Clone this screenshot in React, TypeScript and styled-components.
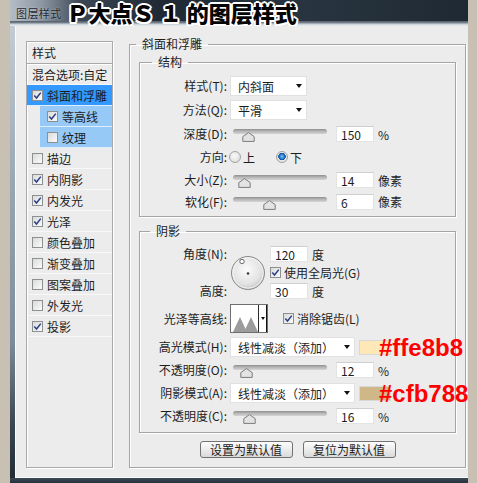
import React from "react";
import styled, { createGlobalStyle } from "styled-components";

const GlobalStyle = createGlobalStyle`
  html, body { margin: 0; padding: 0; background: #c9c0b4; }
  body {
    font-family: "Noto Sans CJK SC", "Noto Sans", sans-serif;
    font-size: 12px;
    color: #1d1d1d;
  }
  * { box-sizing: border-box; }
`;

const Page = styled.div`
  width: 477px;
  height: 483px;
  overflow: hidden;
  padding-left: 10px;
  background: #c9c0b4;
`;

const Window = styled.div`
  width: 458px;
  height: 483px;
  display: flex;
  flex-direction: column;
`;

const TitleBar = styled.div`
  flex: none;
  height: 26px;
  display: flex;
  align-items: center;
  gap: 5px;
  padding: 0 0 1px 6px;
  background:
    linear-gradient(to bottom, rgba(0,0,0,0) 21px, #4f5b67 21px, #7d8893 23px, #c6ced5 24px, #e9edf0 26px),
    linear-gradient(to right, #b4bdc5 0px, #8b96a2 32px, #3a4652 72px, #1f2a35 150px, #28343f 300px, #1e2933 100%);
`;

const TitleSmall = styled.span`
  font-size: 11px;
  line-height: 14px;
  color: #1e2630;
  letter-spacing: 0.4px;
  text-shadow: 0 0 2px rgba(255,255,255,0.6);
`;

const TitleBig = styled.span`
  font-size: 22px;
  line-height: 25px;
  font-weight: 900;
  color: #050505;
  white-space: pre;
  text-shadow:
    2px 0 0 #fff, -2px 0 0 #fff, 0 2px 0 #fff, 0 -2px 0 #fff,
    1.5px 1.5px 0 #fff, -1.5px 1.5px 0 #fff, 1.5px -1.5px 0 #fff, -1.5px -1.5px 0 #fff;
`;

const Body = styled.div`
  flex: 1;
  display: flex;
  padding-left: 5px;
  background: linear-gradient(to bottom, #c3ccd5 0%, #99a7b4 35%, #7d8c9b 70%, #3a4652 88%, #222d38 100%);
`;

const Content = styled.div`
  flex: 1;
  display: flex;
  align-items: stretch;
  gap: 16px;
  padding: 11px 2px 0 10px;
  background: #ececec;
  border-left: 1px solid #fbfbfb;
  border-bottom: 1px solid #fbfbfb;
  align-self: stretch;
`;

const BottomFrame = styled.div`
  flex: none;
  height: 5px;
  background: linear-gradient(to bottom, #3d4955, #26313c);
`;

/* ---------- left style list ---------- */

const StyleList = styled.div`
  width: 87px;
  flex: none;
  margin: 4px 0 9px;
  border: 1px solid #a9a9a9;
  box-shadow: 1px 1px 0 #fff, inset 1px 1px 0 #fff;
  background: #ececec;
  display: flex;
  flex-direction: column;
`;

const ListHeader = styled.div`
  height: 22px;
  padding-left: 5px;
  display: flex;
  align-items: center;
  border-bottom: 1px solid #a9a9a9;
  box-shadow: 0 1px 0 #fff;
`;

type Tone = "plain" | "active" | "sub";

const ListItem = styled.div<{ $tone: Tone }>`
  height: 21px;
  display: flex;
  align-items: center;
  gap: 4px;
  white-space: nowrap;
  border-bottom: 1px solid ${(p) => (p.$tone === "plain" ? "#f8f8f8" : "#dfeefc")};
  margin-left: ${(p) => (p.$tone === "sub" ? "13px" : "0")};
  padding-left: ${(p) => (p.$tone === "sub" ? "7px" : "5px")};
  background: ${(p) => (p.$tone === "active" ? "#3399ff" : p.$tone === "sub" ? "#97c9f7" : "transparent")};
`;

const CheckBoxFrame = styled.span`
  width: 11px;
  height: 11px;
  flex: none;
  border: 1px solid #8e8f90;
  background: linear-gradient(135deg, #d9dadb, #fbfbfb);
  display: inline-flex;
  align-items: center;
  justify-content: center;
`;

function CheckBox({ on }: { on: boolean }) {
  return (
    <CheckBoxFrame>
      {on && (
        <svg width="9" height="9" viewBox="0 0 9 9">
          <path d="M1.3 4.6 L3.5 7 L7.8 1.6" fill="none" stroke="#2b3f86" strokeWidth="1.5" />
        </svg>
      )}
    </CheckBoxFrame>
  );
}

/* ---------- groups ---------- */

const OuterGroup = styled.fieldset`
  flex: 1;
  margin: 0 0 9px;
  min-width: 0;
  padding: 4px 9px 9px;
  border: 1px solid #a5a5a5;
  box-shadow: 1px 1px 0 #fff, inset 1px 1px 0 #fff;
`;

const InnerGroup = styled.fieldset<{ $gapTop: number }>`
  margin: ${(p) => p.$gapTop}px 0 0;
  min-width: 0;
  padding: 0;
  border: 1px solid #a5a5a5;
  box-shadow: 1px 1px 0 #fff, inset 1px 1px 0 #fff;
`;

const GroupLegend = styled.legend<{ $offset: number }>`
  margin-left: ${(p) => p.$offset}px;
  padding: 0 6px;
  font-size: 12px;
  line-height: 14px;
`;

const StructGrid = styled.div`
  display: grid;
  grid-template-rows: 22px 26px 22px 24px 22px 21px;
  padding: 6px 0 4px;
`;

const FormRow = styled.div`
  display: flex;
  align-items: center;
`;

const FieldLabel = styled.div`
  width: 87px;
  flex: none;
  margin-right: 3px;
  text-align: right;
  white-space: nowrap;
  line-height: 14px;
`;

const SelectBox = styled.div<{ $w: number }>`
  width: ${(p) => p.$w}px;
  height: 20px;
  flex: none;
  display: flex;
  align-items: center;
  justify-content: space-between;
  padding: 0 4px 0 7px;
  background: #fff;
  border: 1px solid #e1e1e1;
  white-space: nowrap;
`;

const Caret = styled.span`
  width: 0;
  height: 0;
  border-left: 3.5px solid transparent;
  border-right: 3.5px solid transparent;
  border-top: 4px solid #111;
`;

const SliderBox = styled.div`
  position: relative;
  width: 100px;
  height: 16px;
  flex: none;
`;

const SliderTrack = styled.div`
  margin: 3px 3px 0;
  height: 5px;
  border-radius: 3px;
  background: linear-gradient(to bottom, #8f8f8f, #b9b9b9 50%, #d4d4d4);
`;

const ThumbMark = styled.svg`
  position: absolute;
  top: 6px;
`;

function Slider({ thumb }: { thumb: number }) {
  return (
    <SliderBox>
      <SliderTrack />
      <ThumbMark width="13" height="10" viewBox="0 0 13 10" style={{ left: thumb - 6.5 }}>
        <path d="M6.5 0.6 L12.2 4.6 V9.4 H0.8 V4.6 Z" fill="#e3e3e3" stroke="#7c7c7c" strokeWidth="1" />
      </ThumbMark>
    </SliderBox>
  );
}

const NumBox = styled.div<{ $gap: number }>`
  width: 38px;
  height: 16px;
  flex: none;
  margin-left: ${(p) => p.$gap}px;
  padding-left: 4px;
  line-height: 15px;
  font-size: 12px;
  background: #fff;
  border: 1px solid #e3e3e3;
  border-top-color: #cfcfcf;
`;

const Unit = styled.span`
  margin-left: 4px;
  white-space: nowrap;
`;

const RadioGroup = styled.div`
  display: flex;
  align-items: center;
  margin-left: -1px;
`;

const RadioOption = styled.label<{ $w: number }>`
  width: ${(p) => p.$w}px;
  display: flex;
  align-items: center;
  gap: 2px;
`;

const RadioDot = styled.span<{ $on: boolean }>`
  width: 12px;
  height: 12px;
  border-radius: 50%;
  border: 1px solid #a3a3a3;
  background: ${(p) =>
    p.$on
      ? "radial-gradient(circle at 50% 45%, #7fc3f5 0, #1f76c8 2.5px, #0d4f98 3.5px, #e9e9e9 4px, #d2d2d2 100%)"
      : "radial-gradient(circle at 45% 40%, #fafafa, #d6d6d6)"};
`;

/* ---------- shadow section ---------- */

const ShadowBody = styled.div`
  padding: 8px 0 6px;
  display: flex;
  flex-direction: column;
`;

const AngleGrid = styled.div`
  display: grid;
  grid-template-columns: 87px 37px 1fr;
  grid-template-rows: 16px 21px 16px;
  column-gap: 3px;
  align-items: center;
`;

const GridLabel = styled(FieldLabel)<{ $row: number }>`
  grid-column: 1;
  grid-row: ${(p) => p.$row};
  margin-right: 0;
`;

const GridCell = styled.div<{ $row: number }>`
  grid-column: 3;
  grid-row: ${(p) => p.$row};
  display: flex;
  align-items: center;
  white-space: nowrap;
`;

const DialCell = styled.div`
  grid-column: 2;
  grid-row: 1 / 4;
  justify-self: start;
  align-self: center;
  display: flex;
`;

const CheckText = styled.label`
  display: flex;
  align-items: center;
  gap: 3px;
  white-space: nowrap;
`;

const ContourRow = styled(FormRow)`
  margin-top: 5px;
  height: 29px;
`;

const ContourBox = styled.div`
  width: 38px;
  height: 29px;
  flex: none;
  display: flex;
  border: 1px solid #6f6f6f;
  background: #fff;
`;

const ContourPreview = styled.div`
  width: 27px;
  display: flex;
  align-items: flex-end;
`;

const ContourDrop = styled.div`
  flex: 1;
  display: flex;
  align-items: center;
  justify-content: center;
  border-left: 1px solid #2d2d2d;
  border-right: 1px solid #111;
`;

const SmallCaret = styled.span`
  width: 0;
  height: 0;
  border-left: 2.5px solid transparent;
  border-right: 2.5px solid transparent;
  border-top: 3px solid #111;
`;

const AntiAlias = styled(CheckText)`
  margin-left: 15px;
`;

const ModeRows = styled.div`
  margin-top: 4px;
  display: grid;
  grid-auto-rows: 20px;
  row-gap: 3px;
`;

const SwatchWrap = styled.div`
  position: relative;
  margin-left: 4px;
  display: flex;
`;

const Swatch = styled.div<{ $color: string }>`
  width: 32px;
  height: 15px;
  background: ${(p) => p.$color};
  border: 1px solid #d8d8d8;
`;

const HexNote = styled.span`
  position: absolute;
  left: 20px;
  top: -4px;
  font-family: "Liberation Sans", Arial, sans-serif;
  font-weight: 700;
  font-size: 24px;
  line-height: 24px;
  color: #ff0000;
  white-space: nowrap;
`;

const ButtonRow = styled.div`
  margin-top: 8px;
  display: flex;
  justify-content: center;
  gap: 10px;
`;

const PushButton = styled.button`
  width: 93px;
  height: 17px;
  padding: 0;
  font-family: inherit;
  font-size: 12px;
  line-height: 15px;
  color: #1d1d1d;
  border: 1px solid #727272;
  border-radius: 3px;
  background: linear-gradient(to bottom, #fdfdfd 0%, #ececec 50%, #d9d9d9 100%);
`;

/* ---------- data ---------- */

const listRows: { text: string; on: boolean; tone: Tone }[] = [
  { text: "斜面和浮雕", on: true, tone: "active" },
  { text: "等高线", on: true, tone: "sub" },
  { text: "纹理", on: false, tone: "sub" },
  { text: "描边", on: false, tone: "plain" },
  { text: "内阴影", on: true, tone: "plain" },
  { text: "内发光", on: true, tone: "plain" },
  { text: "光泽", on: true, tone: "plain" },
  { text: "颜色叠加", on: false, tone: "plain" },
  { text: "渐变叠加", on: false, tone: "plain" },
  { text: "图案叠加", on: false, tone: "plain" },
  { text: "外发光", on: false, tone: "plain" },
  { text: "投影", on: true, tone: "plain" },
];

function Dial() {
  return (
    <svg width="36" height="36" viewBox="0 0 36 36">
      <defs>
        <radialGradient id="dialFill" cx="45%" cy="40%" r="62%">
          <stop offset="0" stopColor="#fbfbfb" />
          <stop offset="0.7" stopColor="#e3e3e3" />
          <stop offset="1" stopColor="#c2c2c2" />
        </radialGradient>
      </defs>
      <circle cx="18" cy="18" r="16.5" fill="url(#dialFill)" stroke="#8b8b8b" strokeWidth="1" />
      <circle cx="18" cy="18" r="15.2" fill="none" stroke="#f7f7f7" strokeWidth="0.8" />
      <circle cx="18" cy="18.5" r="1.3" fill="#3a3a3a" />
      <circle cx="12" cy="6.5" r="2.2" fill="#fff" stroke="#4a4a4a" strokeWidth="0.8" />
    </svg>
  );
}

function Mountains() {
  return (
    <svg width="27" height="16" viewBox="0 0 27 16">
      <path d="M2 16 L9 1 L16 16 Z" fill="#9c9c9c" />
      <path d="M13 16 L20 1 L27 16 Z" fill="#9c9c9c" />
    </svg>
  );
}

export default function App() {
  return (
    <Page>
      <GlobalStyle />
      <Window>
        <TitleBar>
          <TitleSmall>图层样式</TitleSmall>
          <TitleBig>{"Ｐ大点Ｓ １ 的图层样式"}</TitleBig>
        </TitleBar>
        <Body>
          <Content>
            <StyleList>
              <ListHeader>样式</ListHeader>
              <ListItem $tone="plain">混合选项:自定</ListItem>
              {listRows.map((r) => (
                <ListItem key={r.text} $tone={r.tone}>
                  <CheckBox on={r.on} />
                  {r.text}
                </ListItem>
              ))}
            </StyleList>

            <OuterGroup>
              <GroupLegend $offset={-3}>斜面和浮雕</GroupLegend>

              <InnerGroup $gapTop={0}>
                <GroupLegend $offset={12}>结构</GroupLegend>
                <StructGrid>
                  <FormRow>
                    <FieldLabel>样式(T):</FieldLabel>
                    <SelectBox $w={77}>
                      内斜面
                      <Caret />
                    </SelectBox>
                  </FormRow>
                  <FormRow>
                    <FieldLabel>方法(Q):</FieldLabel>
                    <SelectBox $w={77}>
                      平滑
                      <Caret />
                    </SelectBox>
                  </FormRow>
                  <FormRow>
                    <FieldLabel>深度(D):</FieldLabel>
                    <Slider thumb={18} />
                    <NumBox $gap={6}>150</NumBox>
                    <Unit>%</Unit>
                  </FormRow>
                  <FormRow>
                    <FieldLabel>方向:</FieldLabel>
                    <RadioGroup>
                      <RadioOption $w={47}>
                        <RadioDot $on={false} />上
                      </RadioOption>
                      <RadioOption $w={30}>
                        <RadioDot $on={true} />下
                      </RadioOption>
                    </RadioGroup>
                  </FormRow>
                  <FormRow>
                    <FieldLabel>大小(Z):</FieldLabel>
                    <Slider thumb={14} />
                    <NumBox $gap={6}>14</NumBox>
                    <Unit>像素</Unit>
                  </FormRow>
                  <FormRow>
                    <FieldLabel>软化(F):</FieldLabel>
                    <Slider thumb={39} />
                    <NumBox $gap={6}>6</NumBox>
                    <Unit>像素</Unit>
                  </FormRow>
                </StructGrid>
              </InnerGroup>

              <InnerGroup $gapTop={7}>
                <GroupLegend $offset={10}>阴影</GroupLegend>
                <ShadowBody>
                  <AngleGrid>
                    <GridLabel $row={1}>角度(N):</GridLabel>
                    <DialCell>
                      <Dial />
                    </DialCell>
                    <GridCell $row={1}>
                      <NumBox $gap={0}>120</NumBox>
                      <Unit>度</Unit>
                    </GridCell>
                    <GridCell $row={2}>
                      <CheckText>
                        <CheckBox on={true} />
                        使用全局光(G)
                      </CheckText>
                    </GridCell>
                    <GridLabel $row={3}>高度:</GridLabel>
                    <GridCell $row={3}>
                      <NumBox $gap={0}>30</NumBox>
                      <Unit>度</Unit>
                    </GridCell>
                  </AngleGrid>

                  <ContourRow>
                    <FieldLabel>光泽等高线:</FieldLabel>
                    <ContourBox>
                      <ContourPreview>
                        <Mountains />
                      </ContourPreview>
                      <ContourDrop>
                        <SmallCaret />
                      </ContourDrop>
                    </ContourBox>
                    <AntiAlias>
                      <CheckBox on={true} />
                      消除锯齿(L)
                    </AntiAlias>
                  </ContourRow>

                  <ModeRows>
                    <FormRow>
                      <FieldLabel>高光模式(H):</FieldLabel>
                      <SelectBox $w={125}>
                        线性减淡（添加）
                        <Caret />
                      </SelectBox>
                      <SwatchWrap>
                        <Swatch $color="#ffe8b8" />
                        <HexNote>#ffe8b8</HexNote>
                      </SwatchWrap>
                    </FormRow>
                    <FormRow>
                      <FieldLabel>不透明度(O):</FieldLabel>
                      <Slider thumb={16} />
                      <NumBox $gap={6}>12</NumBox>
                      <Unit>%</Unit>
                    </FormRow>
                    <FormRow>
                      <FieldLabel>阴影模式(A):</FieldLabel>
                      <SelectBox $w={125}>
                        线性减淡（添加）
                        <Caret />
                      </SelectBox>
                      <SwatchWrap>
                        <Swatch $color="#cfb788" />
                        <HexNote>#cfb788</HexNote>
                      </SwatchWrap>
                    </FormRow>
                    <FormRow>
                      <FieldLabel>不透明度(C):</FieldLabel>
                      <Slider thumb={19} />
                      <NumBox $gap={6}>16</NumBox>
                      <Unit>%</Unit>
                    </FormRow>
                  </ModeRows>
                </ShadowBody>
              </InnerGroup>

              <ButtonRow>
                <PushButton>设置为默认值</PushButton>
                <PushButton>复位为默认值</PushButton>
              </ButtonRow>
            </OuterGroup>
          </Content>
        </Body>
        <BottomFrame />
      </Window>
    </Page>
  );
}
